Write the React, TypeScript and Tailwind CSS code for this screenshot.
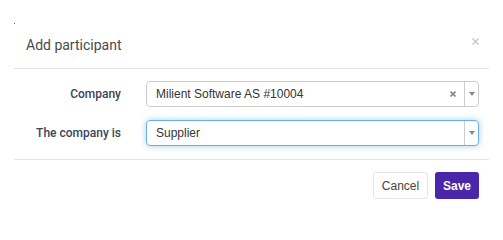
import React from "react";

const Caret = () => (
  <svg width="6" height="4" viewBox="0 0 6 4" className="block">
    <path d="M0 0 L6 0 L3 4 Z" fill="#8a8a8a" />
  </svg>
);

export default function App() {
  return (
    <div className="w-[503px] h-[233px] bg-white" style={{ fontFamily: "Roboto, 'Liberation Sans', sans-serif" }}>
      <div className="pl-[14px] pt-[23px] w-[489px]">
        <div className="w-[1px] h-[1px] bg-[#555]" />
        <div className="flex items-start justify-between pl-[12px] pt-[11px] pb-[13px] border-b border-[#e5e5e5]">
          <div className="text-[14px] leading-[20px] text-[#4a4a4a]">Add participant</div>
          <svg width="7" height="7" viewBox="0 0 7 7" className="mt-[3px] mr-[10px]">
            <path d="M0.5 0.5 L6.5 6.5 M6.5 0.5 L0.5 6.5" stroke="#c4c4c4" strokeWidth="1.2" />
          </svg>
        </div>
        <div className="flex flex-col gap-[13px] pt-[12px] pb-[13px] pr-[10px] border-b border-[#e5e5e5]">
          <div className="flex items-center h-[26px]">
            <div className="w-[107px] text-right text-[12px] font-medium text-[#3c4656]">Company</div>
            <div className="ml-[25px] flex-1 h-[26px] flex items-center border border-[#cccccc] rounded-[4px]" style={{ fontFamily: "'Liberation Sans', Arial, sans-serif" }}>
              <div className="flex-1 pl-[9px] text-[12px] text-[#333]">Milient Software AS #10004</div>
              <svg width="6" height="6" viewBox="0 0 6 6" className="mr-[8px]">
                <path d="M0.5 0.5 L5.5 5.5 M5.5 0.5 L0.5 5.5" stroke="#888" strokeWidth="1.6" />
              </svg>
              <div className="h-full w-[14px] border-l border-[#cccccc] flex items-center justify-center">
                <Caret />
              </div>
            </div>
          </div>
          <div className="flex items-center h-[26px]">
            <div className="w-[107px] text-right text-[12px] font-medium text-[#3c4656]">The company is</div>
            <div className="ml-[25px] flex-1 h-[26px] flex items-center border border-[#66afe9] rounded-[4px] shadow-[0_0_6px_rgba(102,175,233,0.6)]" style={{ fontFamily: "'Liberation Sans', Arial, sans-serif" }}>
              <div className="flex-1 pl-[9px] text-[12px] text-[#333]">Supplier</div>
              <div className="h-full w-[14px] border-l border-[#cccccc] flex items-center justify-center">
                <Caret />
              </div>
            </div>
          </div>
        </div>
        <div className="flex justify-end gap-[7px] pt-[12px] pr-[10px]" style={{ fontFamily: "'Liberation Sans', Arial, sans-serif" }}>
          <button className="w-[55px] h-[27px] rounded-[3px] border border-[#e6e6e6] bg-white text-[12px] text-[#444]">Cancel</button>
          <button className="w-[44px] h-[27px] rounded-[3px] bg-[#4a26a8] text-[12px] font-bold text-white">Save</button>
        </div>
      </div>
    </div>
  );
}
